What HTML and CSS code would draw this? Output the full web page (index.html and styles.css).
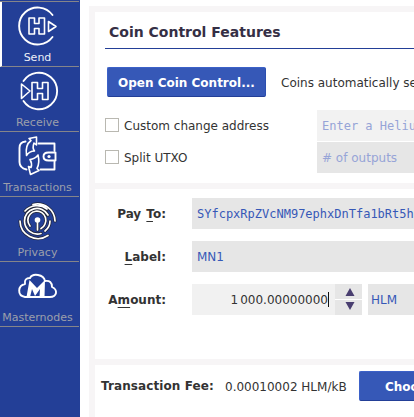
FILE: index.html
```html
<!DOCTYPE html>
<html lang="en">
<head>
<meta charset="utf-8">
<title>Send</title>
<link rel="stylesheet" href="styles.css">
</head>
<body>
<div class="app">
  <nav class="sidebar">
    <a class="tab active">
      <svg class="icon" viewBox="0 0 40 40"><path class="ring" d="M34.500 9A18.500 18.500 0 1 0 34.500 31"/><path class="line" d="M11 12h5.500v5.500h4.500v-5.500h5.500v16h-5.500v-5.500h-4.500v5.500h-5.500zM30.500 15.500v10l7.500-5z"/></svg>
      <span>Send</span>
    </a>
    <a class="tab">
      <svg class="icon" viewBox="0 0 40 40"><path class="ring" d="M5.500 10A18.300 18.300 0 1 1 5.500 30"/><path class="line" d="M14 11.500h5.500v6h5v-6h5.500v17h-5.500v-6h-5v6h-5.500zM3.500 13v14.500l8.500-7.500z"/></svg>
      <span>Receive</span>
    </a>
    <a class="tab">
      <svg class="icon" viewBox="0 0 40 40"><path class="wallet" d="M7.500 5.500Q1.500 6 1.500 12v14q0 6 7 7.500M20.500 7.500H36.500v7M36.500 26v7.500H22.500M37.500 16.500h-7q-5 0-5 4t5 4h7z"/><path class="line" d="M8.500 19.500Q7 9 13 4.500L11 2.500l7.500-1.500v8l-2.500-2q-2 5 .5 8-5 0-8 4.500zM12 23.500q5-.5 8-4.500 2 8-1 13.500l2 2-8.500 4-2-8 2.500 1q1.500-4-1-8z"/><circle class="solid" cx="31" cy="20.500" r="1.600"/></svg>
      <span>Transactions</span>
    </a>
    <a class="tab">
      <svg class="icon" viewBox="0 0 40 40"><g class="shade"><path d="M15 3.500A17.500 17.500 0 0 1 37 20M7 10A16.500 16.500 0 0 1 29 8M2 20A18 18 0 0 0 30 34.500M6.500 20A12.500 12.500 0 0 1 30 14M6.500 20A13 13 0 0 0 23 32.500M32 20Q32 26 27 30M12 25A9 9 0 1 1 27 23Q26 26 23 27.500M19.500 19v10"/></g><g class="print"><path d="M15 3.500A17.500 17.500 0 0 1 37 20M7 10A16.500 16.500 0 0 1 29 8M2 20A18 18 0 0 0 30 34.500M6.500 20A12.500 12.500 0 0 1 30 14M6.500 20A13 13 0 0 0 23 32.500M32 20Q32 26 27 30M12 25A9 9 0 1 1 27 23Q26 26 23 27.500M19.500 19v10"/></g><circle class="solid" cx="19.500" cy="19" r="2.800"/></svg>
      <span>Privacy</span>
    </a>
    <a class="tab">
      <svg class="icon" viewBox="0 0 40 40"><path class="wallet" d="M7 31Q1 30 1.200 24.500 1.500 19 7 18 6 12 12 12 14 8 20 9 26 10 27 15 34 14 34 21 38.500 23 38 27 37 31 32 31z"/><path class="solid" d="M8.500 31l3-17 7.500 8 8-8-.5 17h-5l.5-8-5 7-3-7-2 8z"/></svg>
      <span>Masternodes</span>
    </a>
  </nav>
  <main class="content">
    <section class="panel coin">
      <h1>Coin Control Features</h1>
      <div class="row open">
        <button class="btn wide">Open Coin Control...</button>
        <span class="auto">Coins automatically selected</span>
      </div>
      <div class="row option"><i class="check"></i><span class="name">Custom change address</span><div class="field light mono">Enter a Helium address</div></div>
      <div class="row option"><i class="check"></i><span class="name">Split UTXO</span><div class="field"># of outputs</div></div>
    </section>
    <section class="panel pay">
      <div class="row"><label class="to">Pay <u>T</u>o:</label><div class="field mono">SYfcpxRpZVcNM97ephxDnTfa1bRt5h</div></div>
      <div class="row"><label><u>L</u>abel:</label><div class="field">MN1</div></div>
      <div class="row"><label>A<u>m</u>ount:</label>
        <div class="amount"><span>1<span class="thin"></span>000.00000000</span><i class="caret"></i></div>
        <div class="spin"><svg viewBox="0 0 27 31"><path class="divider" d="M0 15.500h27"/><path class="arrow" d="M15 4l4.500 8h-9zM15 26l4.500-8h-9z"/></svg></div>
        <div class="field unit">HLM</div>
      </div>
    </section>
    <section class="panel fee">
      <b>Transaction Fee:</b><span class="rate">0.00010002 HLM/kB</span><button class="btn">Choose...</button>
    </section>
  </main>
</div>
</body>
</html>
```
FILE: styles.css
```css
* { box-sizing: border-box; }
body { margin: 0; overflow: hidden; background: #fff; color: #333; font: 12px/16px "DejaVu Sans", sans-serif; }
.app { display: flex; width: 414px; height: 417px; overflow: hidden; }
.sidebar { flex: 0 0 80px; background: linear-gradient(#85858a, #85858a) 0 1px / 79px 1px no-repeat #233f97; padding-top: 2px; }
.tab { display: flex; flex-direction: column; align-items: center; width: 79px; height: 65px; padding: 4px 4px 0 0; border-bottom: 1px solid #85858a; color: #9c9fab; font-size: 11px; line-height: 14px; }
.tab.active { color: #eef0f8; border-left: 2px solid #fff; padding-right: 6px; }
.tab span { margin-top: 5px; }
.icon { width: 40px; height: 40px; overflow: visible; }
.icon path { fill: none; stroke: #fff; stroke-linejoin: round; stroke-linecap: round; }
.icon .ring { stroke-width: 1.9; }
.icon .line { stroke-width: 1.6; }
.icon .wallet { stroke-width: 1.9; }
.icon .shade path { stroke: #222638; stroke-width: 3.2; }
.icon .print path { stroke: #fff; stroke-width: 1.7; }
.icon .solid { fill: #fff; stroke: none; }
.content { flex: none; width: 600px; margin: 6px 0 0 9px; padding: 6px 0 0 6px; background: #f7f5f6; display: flex; flex-direction: column; gap: 6px; }
.panel { background: #fff; flex: none; }
.row { display: flex; align-items: center; }
.coin { height: 171px; padding-left: 10px; }
h1 { margin: 0 0 18px; height: 37px; padding: 10px 0 0 4px; border-bottom: 1px solid #233f97; color: #352f45; font-size: 14px; line-height: 20px; }
.open { height: 30px; padding-left: 2px; margin-bottom: 13px; }
.btn { height: 30px; border: 1px solid #2c4fb0; border-top-color: #3c61c8; border-left-color: #3c61c8; border-bottom: 1px solid #233f97; border-radius: 2px; background: #3658b7; color: #fff; font: bold 12px/16px "DejaVu Sans", sans-serif; padding: 1px 0 0 25px; text-align: left; width: 120px; flex: none; }
.wide { width: 159px; padding-left: 10px; }
.auto { margin-left: 15px; padding-top: 1px; white-space: nowrap; }
.option { height: 31px; margin-bottom: 1px; }
.check { width: 14px; height: 14px; margin-top: -1px; border: 1px solid #b9b8b1; margin-right: 5px; }
.name { width: 193px; }
.field { flex: 1; height: 31px; padding-left: 5px; line-height: 32px; background: #e6e6e6; color: #3658b7; white-space: nowrap; }
.option .field { color: #96a4d7; }
.field.light { background: #f2f2f2; }
.mono { font-family: "DejaVu Sans Mono", monospace; }
.pay { height: 170px; padding-top: 9px; }
.pay .row { height: 31px; margin-bottom: 12px; }
.pay .field { line-height: 33px; }
label { width: 71px; margin-right: 26px; text-align: right; font-weight: bold; }
label.to { word-spacing: 1px; }
u { text-underline-offset: 3px; text-decoration-thickness: 1px; text-decoration-skip-ink: none; }
.amount { width: 143px; height: 31px; padding-right: 6px; background: #f1f1f1; display: flex; align-items: center; justify-content: flex-end; }
.thin { display: inline-block; width: 2px; }
.caret { width: 1px; height: 15px; background: #111; }
.spin { width: 27px; height: 31px; background: #e6e6e6; }
.spin svg { display: block; width: 27px; height: 31px; }
.divider { stroke: #fff; }
.arrow { fill: #493e70; }
.unit { margin-left: 6px; padding-left: 3px; }
.fee { height: 60px; display: flex; padding: 6px 0 0 6px; }
.fee b { margin-top: 7px; width: 124px; letter-spacing: .1px; white-space: nowrap; }
.rate { margin-top: 8px; width: 134px; white-space: nowrap; }
```
